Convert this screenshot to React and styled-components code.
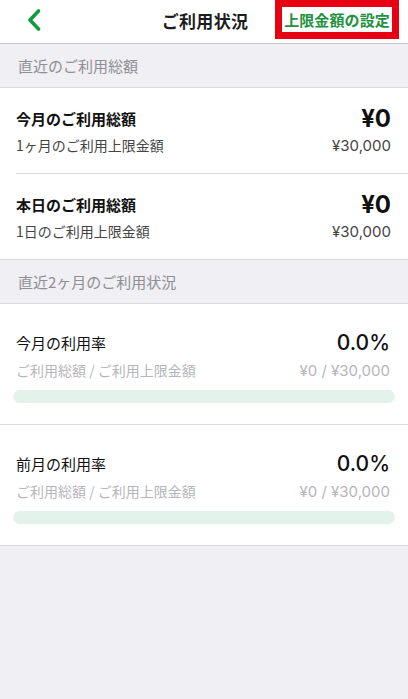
import React from 'react'
import styled, { createGlobalStyle } from 'styled-components'

const GlobalStyle = createGlobalStyle`
    html, body {
        margin: 0;
        padding: 0;
        background-color: #efeff4;
    }
    body {
        font-family: "Noto Sans CJK JP", "Noto Sans", sans-serif;
        -webkit-font-smoothing: antialiased;
    }
`

const Page = styled.div`
    width: 408px;
    min-height: 699px;
    background-color: #efeff4;
`
const NavBar = styled.header`
    position: relative;
    display: flex;
    align-items: center;
    justify-content: center;
    height: 43px;
    background-color: #fff;
    border-bottom: 1px solid #c9c9ce;
`
const BackButton = styled.button`
    position: absolute;
    left: 22px;
    top: 6px;
    width: 24px;
    height: 28px;
    padding: 0;
    border: none;
    background: none;
    display: flex;
    align-items: center;
    justify-content: center;
`
const NavTitle = styled.h1`
    margin: 0 0 2px 2px;
    font-size: 17px;
    font-weight: 700;
    color: #1d1d1d;
    letter-spacing: 0.3px;
`
const LimitSetting = styled.a`
    position: absolute;
    top: 0;
    left: 275px;
    width: 124px;
    height: 39px;
    box-sizing: border-box;
    border: 7px solid #e60012;
    background-color: #fff;
    display: flex;
    align-items: center;
    justify-content: center;
    font-size: 15px;
    font-weight: 700;
    color: #22923e;
    text-decoration: none;
    white-space: nowrap;
    letter-spacing: 0.1px;
`
const SectionHeader = styled.div`
    display: flex;
    align-items: center;
    height: 43px;
    padding-left: 18px;
    font-size: 15px;
    color: #8e8e93;
    border-bottom: 1px solid #d9d9de;
`
const Card = styled.section`
    background-color: #fff;
    border-bottom: 1px solid #d9d9de;
`
const TotalRow = styled.div`
    margin-left: 16px;
    padding: 16px 17px 18px 0;
    border-bottom: ${p => (p.$last ? 'none' : '1px solid #dcdce0')};
`
const Line = styled.div`
    display: flex;
    align-items: center;
    justify-content: space-between;
    height: ${p => p.$h || 20}px;
    margin-top: ${p => p.$gap || 0}px;
`
const TitleBold = styled.span`
    font-size: 15px;
    font-weight: 700;
    color: #111;
`
const SubText = styled.span`
    font-size: 14px;
    color: ${p => (p.$muted ? '#b5b5ba' : '#444')};
`
const Amount = styled.span`
    font-family: Inter, "Liberation Sans", sans-serif;
    font-size: 24px;
    font-weight: 700;
    color: #111;
`
const Money = styled.span`
    font-family: Inter, "Liberation Sans", sans-serif;
    font-size: 15px;
    color: ${p => (p.$muted ? '#b5b5ba' : '#444')};
`
const UsageRow = styled.div`
    padding: 24px 13px 21px;
    border-bottom: ${p => (p.$last ? 'none' : '1px solid #dcdce0')};
`
const UsageText = styled.div`
    padding: 0 5px 0 3px;
`
const UsageTitle = styled.span`
    font-size: 15px;
    color: #111;
`
const Rate = styled.span`
    font-family: Inter, "Liberation Sans", sans-serif;
    font-size: 21px;
    font-weight: 500;
    color: #111;
`
const Bar = styled.div`
    margin-top: 10px;
    height: 13px;
    border-radius: 7px;
    background-color: #e3f2ea;
    overflow: hidden;
`
const BarFill = styled.div`
    height: 100%;
    background-color: #22923e;
`

const totals = [
    { title: '今月のご利用総額', amount: '¥0', label: '1ヶ月のご利用上限金額', limit: '¥30,000' },
    { title: '本日のご利用総額', amount: '¥0', label: '1日のご利用上限金額', limit: '¥30,000' },
]

const usages = [
    { title: '今月の利用率', used: 0, limit: 30000 },
    { title: '前月の利用率', used: 0, limit: 30000 },
]

const yen = n => '¥' + n.toLocaleString('en-US')

function UsageItem({ item, last }) {
    const rate = item.limit ? (item.used / item.limit) * 100 : 0
    return (
        <UsageRow $last={last}>
            <UsageText>
                <Line $h={28}>
                    <UsageTitle>{item.title}</UsageTitle>
                    <Rate>{rate.toFixed(1)}%</Rate>
                </Line>
                <Line $h={20} $gap={4}>
                    <SubText $muted>ご利用総額 / ご利用上限金額</SubText>
                    <Money $muted>{yen(item.used)} / {yen(item.limit)}</Money>
                </Line>
            </UsageText>
            <Bar>
                <BarFill style={{ width: `${rate}%` }} />
            </Bar>
        </UsageRow>
    )
}

export default function App() {
    return (
        <Page>
            <GlobalStyle />
            <NavBar>
                <BackButton aria-label="戻る">
                    <svg width="16" height="22" viewBox="0 0 16 22">
                        <path d="M12.5 2 L4 11 L12.5 20" fill="none" stroke="#119a3f" strokeWidth="3.6" strokeLinecap="round" strokeLinejoin="round" />
                    </svg>
                </BackButton>
                <NavTitle>ご利用状況</NavTitle>
                <LimitSetting href="#">上限金額の設定</LimitSetting>
            </NavBar>

            <SectionHeader>直近のご利用総額</SectionHeader>
            <Card>
                {totals.map((t, i) => (
                    <TotalRow key={t.title} $last={i === totals.length - 1}>
                        <Line $h={28}>
                            <TitleBold>{t.title}</TitleBold>
                            <Amount>{t.amount}</Amount>
                        </Line>
                        <Line $h={20} $gap={3}>
                            <SubText>{t.label}</SubText>
                            <Money>{t.limit}</Money>
                        </Line>
                    </TotalRow>
                ))}
            </Card>

            <SectionHeader>直近2ヶ月のご利用状況</SectionHeader>
            <Card>
                {usages.map((u, i) => (
                    <UsageItem key={u.title} item={u} last={i === usages.length - 1} />
                ))}
            </Card>
        </Page>
    )
}
